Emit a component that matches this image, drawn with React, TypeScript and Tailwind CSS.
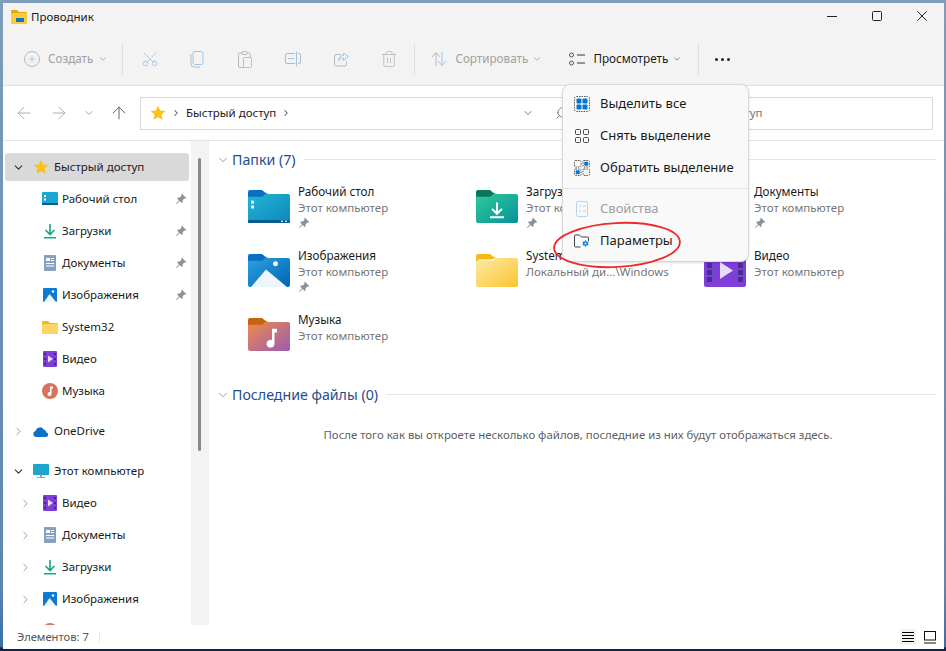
import React from "react";
import { ChevronDown, ChevronRight, Plus, Scissors, Trash2, ArrowLeft, ArrowRight, ArrowUp, Search } from "lucide-react";

// colourful folder with an optional glyph on it
function Folder({ id, tab, from, to, children }: { id: string; tab: string; from: string; to: string; children?: React.ReactNode }) {
  return (
    <svg width="42" height="33" viewBox="0 0 42 34" preserveAspectRatio="none" className="shrink-0">
      <defs>
        <linearGradient id={id} x1="0" y1="0" x2="1" y2="1">
          <stop offset="0" stopColor={from} />
          <stop offset="1" stopColor={to} />
        </linearGradient>
      </defs>
      <path d="M0 2a2 2 0 0 1 2-2h12l3 2.500 3 1.500h-2l-3 4h-15z" fill={tab} />
      <path d="M0 7h14l4-3h22a2 2 0 0 1 2 2v26a2 2 0 0 1-2 2h-38a2 2 0 0 1-2-2z" fill={`url(#${id})`} />
      {children}
    </svg>
  );
}

function Pin({ className = "" }: { className?: string }) {
  return (
    <svg width="12" height="12" viewBox="0 0 12 12" className={className}>
      <path d="M7 .8 11.200 5 10.200 5.800 9.400 5.400 7.600 7.200 7.600 9.200 6.600 10 4.700 8 1.500 11 1 10.500 4 7.300 2 5.400 2.800 4.400 4.800 4.400 6.600 2.600 6.200 1.800z" fill="#8b9199" />
    </svg>
  );
}

const DesktopFolder = () => (
  <Folder id="f1" tab="#0a6ec2" from="#21b6d8" to="#0f86b8">
    <rect x="0" y="31" width="42" height="3" rx="1" fill="#0b5a8c" />
    <rect x="3" y="11" width="3" height="3" fill="#fff" />
    <rect x="3" y="16" width="3" height="3" fill="#fff" />
    <rect x="33" y="31.500" width="2" height="1.500" fill="#bfe6f5" />
    <rect x="37" y="31.500" width="2" height="1.500" fill="#bfe6f5" />
  </Folder>
);
const DownloadFolder = () => (
  <Folder id="f2" tab="#06785f" from="#2fcb97" to="#07929c">
    <path d="M21 13v11M16 19.500l5 5 5-5M14 28h14" stroke="#fff" strokeWidth="2" fill="none" />
  </Folder>
);
const DocsFolder = () => (
  <Folder id="f3" tab="#4d6f9e" from="#9fb9d4" to="#6f8fb5">
    <rect x="12" y="12" width="18" height="2" fill="#fff" />
    <rect x="12" y="17" width="18" height="2" fill="#fff" />
    <rect x="12" y="22" width="12" height="2" fill="#fff" />
  </Folder>
);
const PicturesFolder = () => (
  <Folder id="f4" tab="#0a6ec2" from="#29a3e4" to="#0562ad">
    <circle cx="27.500" cy="10" r="2.500" fill="#fff" />
    <path d="M3 34 18 16 39 34z" fill="#eef6fd" />
  </Folder>
);
const YellowFolder = () => (
  <Folder id="f5" tab="#f5b914" from="#fde9a6" to="#fcc52f">
    <rect x="2" y="5.500" width="16" height="1.500" fill="#fff" opacity="0.8" />
  </Folder>
);
const MusicFolder = () => (
  <Folder id="f6" tab="#c4640f" from="#f08a4a" to="#9a5cb0">
    <path d="M24 11h5v4h-2.500v11.500a4 4 0 1 1-2.500-3.700z" fill="#fff" />
  </Folder>
);
const VideoTile = () => (
  <svg width="42" height="33" viewBox="0 0 42 33" className="shrink-0">
    <rect width="42" height="33" rx="2" fill="#7e3fd8" />
    {[2, 9, 16, 23].map((y) => (
      <React.Fragment key={y}>
        <rect x="3" y={y} width="5" height="5" fill="#45308f" />
        <rect x="34" y={y} width="5" height="5" fill="#45308f" />
      </React.Fragment>
    ))}
    <path d="M16 8 29 16.500 16 25z" fill="#e6dcfa" />
  </svg>
);

// small sidebar glyphs
const SmallIcon = ({ name }: { name: string }) => {
  if (name === "star")
    return (
      <svg width="16" height="16" viewBox="0 0 16 16">
        <path d="M8 .8 10.200 5.500 15.300 6.100 11.500 9.600 12.600 14.800 8 12.200 3.400 14.800 4.500 9.600.7 6.100 5.800 5.500z" fill="#fcc21b" />
      </svg>
    );
  if (name === "desktop")
    return (
      <svg width="16" height="14" viewBox="0 0 16 14">
        <rect width="16" height="12" rx="1" fill="#19a6d1" />
        <rect y="11" width="16" height="2" fill="#0b5a8c" />
        <rect x="2" y="3" width="2" height="2" fill="#fff" />
        <rect x="2" y="6.500" width="2" height="2" fill="#fff" />
      </svg>
    );
  if (name === "download")
    return (
      <svg width="14" height="16" viewBox="0 0 14 16">
        <path d="M7 1v10M2.500 7 7 11.500 11.500 7" stroke="#12a884" strokeWidth="1.600" fill="none" />
        <rect x="1" y="14" width="12" height="1.500" fill="#12a884" />
      </svg>
    );
  if (name === "docs")
    return (
      <svg width="12" height="16" viewBox="0 0 12 16">
        <rect width="12" height="16" rx="1" fill="#86a0bf" />
        <rect x="2" y="3" width="4" height="3" fill="#fff" />
        <rect x="7" y="3" width="3" height="1" fill="#fff" />
        <rect x="7" y="5" width="3" height="1" fill="#fff" />
        <rect x="2" y="8" width="8" height="1" fill="#fff" />
        <rect x="2" y="10.500" width="8" height="1" fill="#fff" />
      </svg>
    );
  if (name === "pictures")
    return (
      <svg width="14" height="14" viewBox="0 0 14 14">
        <rect width="14" height="14" rx="1" fill="#0f7bd0" />
        <circle cx="10" cy="3.500" r="1.200" fill="#fff" />
        <path d="M1 14 6.500 6 13 14z" fill="#eef6fd" />
      </svg>
    );
  if (name === "folder")
    return (
      <svg width="16" height="13" viewBox="0 0 16 13">
        <path d="M0 1a1 1 0 0 1 1-1h5l2 2h7a1 1 0 0 1 1 1v1h-16z" fill="#f5b914" />
        <path d="M0 3h16v9a1 1 0 0 1-1 1h-14a1 1 0 0 1-1-1z" fill="#fdd565" />
      </svg>
    );
  if (name === "video")
    return (
      <svg width="14" height="16" viewBox="0 0 14 16">
        <rect width="14" height="16" rx="1" fill="#7e3fd8" />
        {[2, 7, 12].map((y) => (
          <React.Fragment key={y}>
            <rect x="1" y={y} width="2" height="2" fill="#3f2a80" />
            <rect x="11" y={y} width="2" height="2" fill="#3f2a80" />
          </React.Fragment>
        ))}
        <path d="M5 4.500 10 8 5 11.500z" fill="#e6dcfa" />
      </svg>
    );
  if (name === "music")
    return (
      <svg width="16" height="16" viewBox="0 0 16 16">
        <circle cx="8" cy="8" r="8" fill="#d9735c" />
        <path d="M8 3.500h3v2h-1.500v5.500a2 2 0 1 1-1.500-1.900z" fill="#fff" />
      </svg>
    );
  if (name === "onedrive")
    return (
      <svg width="16" height="11" viewBox="0 0 16 11">
        <path d="M3 11a3 3 0 0 1-.500-5.900 4.500 4.500 0 0 1 8.200-1.700 3.800 3.800 0 0 1 2.800 3.100 2.300 2.300 0 0 1-.300 4.500z" fill="#0f6fc6" />
      </svg>
    );
  return (
    <svg width="16" height="15" viewBox="0 0 16 15">
      <rect width="16" height="11" rx="1" fill="#1ea6cf" />
      <rect x="7" y="11" width="2" height="2" fill="#9aa5ad" />
      <rect x="4" y="13" width="8" height="1" fill="#9aa5ad" />
    </svg>
  );
};

type NavItem = { label?: string; icon: string; pin?: boolean; arrow?: boolean };

function NavRow({ label, icon, pin, arrow }: NavItem) {
  return (
    <div className="h-8 flex items-center pr-[4px] shrink-0">
      <div className="w-[34px] pl-[16px] shrink-0">
        {arrow && <ChevronRight size={13} strokeWidth={1.5} className="text-[#8a8a8a]" />}
      </div>
      <div className="w-[25px] shrink-0 flex justify-center">
        <SmallIcon name={icon} />
      </div>
      <span className="flex-1 text-[11.500px] text-[#1a1a1a]">{label}</span>
      {pin && <Pin />}
    </div>
  );
}

function NavHeader({ label, icon, open, active }: { label: string; icon: string; open?: boolean; active?: boolean }) {
  return (
    <div className={`h-7 flex items-center shrink-0 mx-[2px] rounded-[3px] ${active ? "bg-[#d9d9d9]" : ""}`}>
      <div className="w-[26px] pl-[7px] shrink-0">
        {open ? (
          <ChevronDown size={13} strokeWidth={2} className="text-[#333]" />
        ) : (
          <ChevronRight size={13} strokeWidth={1.5} className="text-[#8a8a8a]" />
        )}
      </div>
      <div className="w-[16px] mr-[5px] ml-[2px] shrink-0 flex justify-center">
        <SmallIcon name={icon} />
      </div>
      <span className="text-[11.500px] text-[#1a1a1a] pb-[1px]">{label}</span>
    </div>
  );
}

const folders = [
  { name: "Рабочий стол", sub: "Этот компьютер", pin: true, icon: <DesktopFolder /> },
  { name: "Загрузки", sub: "Этот компьютер", pin: true, icon: <DownloadFolder /> },
  { name: "Документы", sub: "Этот компьютер", pin: true, icon: <DocsFolder /> },
  { name: "Изображения", sub: "Этот компьютер", pin: true, icon: <PicturesFolder /> },
  { name: "System32", sub: "Локальный ди...\\Windows", pin: false, icon: <YellowFolder /> },
  { name: "Видео", sub: "Этот компьютер", pin: false, icon: <VideoTile /> },
  { name: "Музыка", sub: "Этот компьютер", pin: false, icon: <MusicFolder /> },
];

const toolSep = <div className="w-px h-8 bg-[#e0e0e0] shrink-0" />;

const dashed = { stroke: "#555", strokeDasharray: "1.500 1", fill: "none" };

const SelectAllIcon = () => (
  <svg width="16" height="16" viewBox="0 0 16 16" className="shrink-0">
    <rect x="0.500" y="0.500" width="15" height="15" rx="2" {...dashed} />
    <rect x="2.500" y="2.500" width="5" height="5" rx="1" fill="#0078d4" />
    <rect x="8.500" y="2.500" width="5" height="5" rx="1" fill="#0078d4" />
    <rect x="2.500" y="8.500" width="5" height="5" rx="1" fill="#0078d4" />
    <rect x="8.500" y="8.500" width="5" height="5" rx="1" fill="#0078d4" />
  </svg>
);
const SelectNoneIcon = () => (
  <svg width="16" height="16" viewBox="0 0 16 16" className="shrink-0" fill="none" stroke="#444">
    <rect x="1.500" y="1.500" width="5" height="5" rx="1" />
    <rect x="9.500" y="1.500" width="5" height="5" rx="1" />
    <rect x="1.500" y="9.500" width="5" height="5" rx="1" />
    <rect x="9.500" y="9.500" width="5" height="5" rx="1" />
  </svg>
);
const SelectInvertIcon = () => (
  <svg width="16" height="16" viewBox="0 0 16 16" className="shrink-0">
    <rect x="0.500" y="0.500" width="6.500" height="6.500" rx="1" {...dashed} />
    <rect x="9" y="0.500" width="6.500" height="6.500" rx="1" {...dashed} />
    <rect x="10.200" y="1.700" width="4.100" height="4.100" rx="1" fill="#0078d4" />
    <rect x="0.500" y="9" width="6.500" height="6.500" rx="1" {...dashed} />
    <rect x="1.700" y="10.200" width="4.100" height="4.100" rx="1" fill="#0078d4" />
    <rect x="9" y="9" width="6.500" height="6.500" rx="1" {...dashed} />
  </svg>
);

export default function App() {
  return (
    <div className="w-[946px] h-[651px] bg-[linear-gradient(180deg,#7d9dba_0%,#5f86ad_90%,#3a6ea8_99.400%,#0d2347_99.500%)] p-[3px] pr-[2px] overflow-hidden" style={{ fontFamily: '"Noto Sans", sans-serif' }}>
      <div className="relative w-full h-[646px] bg-white flex flex-col">
        {/* title + command bar */}
        <div className="h-[83px] bg-[#f3f3f3] border-b border-[#e0e0e0] shrink-0 flex flex-col">
          <div className="h-[28px] flex items-center pl-[8px] shrink-0">
            <svg width="16" height="14" viewBox="0 0 16 14" className="mr-[4px]">
              <path d="M0 1a1 1 0 0 1 1-1h5l2 2h7a1 1 0 0 1 1 1v1h-16z" fill="#e8a80c" />
              <path d="M0 3h16v10a1 1 0 0 1-1 1h-14a1 1 0 0 1-1-1z" fill="#fcc93c" />
              <rect x="5" y="8" width="8" height="4" fill="#0f76c8" />
            </svg>
            <span className="text-[11.500px] text-[#1a1a1a]">Проводник</span>
            <div className="flex-1" />
            <svg width="10" height="10" viewBox="0 0 10 10" className="mr-[35px] mb-[2px]" fill="none" stroke="#222">
              <path d="M0 5.500h10" />
            </svg>
            <svg width="10" height="10" viewBox="0 0 10 10" className="mr-[35px] mb-[2px]" fill="none" stroke="#222">
              <rect x="0.500" y="0.500" width="9" height="9" rx="1" />
            </svg>
            <svg width="10" height="10" viewBox="0 0 10 10" className="mr-[17px] mb-[2px]" fill="none" stroke="#222">
              <path d="M.3.300l9.400 9.400M9.700.300l-9.400 9.400" />
            </svg>
          </div>
          <div className="flex-1 flex items-center pl-[21px] pt-[2px]">
            <div className="w-[16px] h-[16px] rounded-full border border-[#b9b9b9] flex items-center justify-center mr-[8px]">
              <Plus size={10} className="text-[#9cc5e8]" />
            </div>
            <span className="text-[11.700px] text-[#a0a0a0]">Создать</span>
            <ChevronDown size={10} className="text-[#a0a0a0] ml-[5px] mr-[14px]" />
            {toolSep}
            <Scissors size={18} strokeWidth={1.1} className="text-[#9cc5e8] ml-[18px] -rotate-90" />
            <svg width="14" height="17" viewBox="0 0 14 17" className="ml-[31px]" fill="none">
              <rect x="3" y="0.500" width="10" height="13" rx="2" stroke="#9cc5e8" />
              <path d="M1 3v10a3 3 0 0 0 3 3h6" stroke="#b9b9b9" />
            </svg>
            <svg width="14" height="17" viewBox="0 0 14 17" className="ml-[34px]" fill="none">
              <rect x="0.500" y="2" width="12" height="14.500" rx="1.500" stroke="#b9b9b9" />
              <rect x="4" y="0.500" width="5" height="3" rx="1" stroke="#b9b9b9" fill="#f3f3f3" />
              <rect x="5.500" y="6.500" width="8" height="10" rx="1" stroke="#9cc5e8" fill="#f3f3f3" />
            </svg>
            <svg width="16" height="16" viewBox="0 0 16 16" className="ml-[33px]" fill="none">
              <path d="M10 2.500h-8a1.500 1.500 0 0 0-1.500 1.500v7a1.500 1.500 0 0 0 1.500 1.500h8M13 2.500h1a1.500 1.500 0 0 1 1.500 1.500v7a1.500 1.500 0 0 1-1.500 1.500h-1" stroke="#b9b9b9" />
              <path d="M11.500 .5v15M3 7.500h6" stroke="#9cc5e8" />
            </svg>
            <svg width="15" height="15" viewBox="0 0 15 15" className="ml-[33px]" fill="none">
              <path d="M7 2.500h-5a1.500 1.500 0 0 0-1.500 1.500v8.500a1.500 1.500 0 0 0 1.500 1.500h9a1.500 1.500 0 0 0 1.500-1.500v-3" stroke="#b9b9b9" />
              <path d="M9.500 1v2.500c-3 0-5 2-5 5.500 1-2 2.500-2.800 5-2.800v2.300l5-4z" stroke="#9cc5e8" />
            </svg>
            <Trash2 size={18} strokeWidth={1.1} className="text-[#b9b9b9] ml-[31px]" />
            <div className="ml-[16px]">{toolSep}</div>
            <svg width="16" height="16" viewBox="0 0 16 16" className="ml-[16px]" fill="none">
              <path d="M5 15V2M1 6l4-4.500L9 6" stroke="#b9b9b9" />
              <path d="M11 1v13M7 10l4 4.500 4-4.500" stroke="#9cc5e8" />
            </svg>
            <span className="text-[11.700px] text-[#a0a0a0] ml-[8px] w-[72px] whitespace-nowrap">Сортировать</span>
            <ChevronDown size={10} className="text-[#a0a0a0] ml-[5px]" />
            <svg width="16" height="14" viewBox="0 0 16 14" className="ml-[27px] shrink-0" fill="none">
              <circle cx="2.500" cy="3" r="2" stroke="#555" />
              <circle cx="2.500" cy="11" r="2" stroke="#555" />
              <path d="M8 3h8M8 11h8" stroke="#333" />
            </svg>
            <span className="text-[11.700px] text-[#1a1a1a] ml-[8px] w-[74px] whitespace-nowrap">Просмотреть</span>
            <ChevronDown size={10} className="text-[#777] ml-[5px] mr-[16px]" />
            {toolSep}
            <div className="flex gap-[3px] ml-[16px]">
              <div className="w-[3px] h-[3px] rounded-full bg-[#222]" />
              <div className="w-[3px] h-[3px] rounded-full bg-[#222]" />
              <div className="w-[3px] h-[3px] rounded-full bg-[#222]" />
            </div>
          </div>
        </div>

        {/* address row */}
        <div className="h-[55px] border-b border-[#e5e5e5] shrink-0 flex items-center pl-[11px] pr-[11px]">
          <ArrowLeft size={20} strokeWidth={1.1} className="text-[#a8a8a8]" />
          <ArrowRight size={20} strokeWidth={1.1} className="text-[#a8a8a8] ml-[15px]" />
          <ChevronDown size={12} className="text-[#a8a8a8] ml-[14px]" />
          <ArrowUp size={20} strokeWidth={1.1} className="text-[#555] ml-[14px]" />
          <div className="ml-[11px] flex-1 h-[33px] border border-[#d9d9d9] flex items-center text-[11.500px]">
            <div className="w-[393px] shrink-0 flex items-center pl-[9px]">
              <SmallIcon name="star" />
              <ChevronRight size={10} strokeWidth={2.500} className="text-[#555] ml-[5px] mr-[5px]" />
              <span className="text-[#1a1a1a]">Быстрый доступ</span>
              <ChevronRight size={10} strokeWidth={2.500} className="text-[#555] ml-[5px]" />
              <div className="flex-1" />
              <ChevronDown size={12} className="text-[#777]" />
            </div>
            <Search size={14} strokeWidth={1.2} className="text-[#555] ml-[21px] -scale-x-100" />
            <span className="text-[#777] ml-[63px]">Поиск: Быстрый доступ</span>
          </div>
        </div>

        {/* body */}
        <div className="flex-1 flex min-h-0">
          <div className="w-[188px] shrink-0 overflow-hidden flex flex-col pt-[12px]">
            <NavHeader label="Быстрый доступ" icon="star" open active />
            <div className="h-[2px] shrink-0" />
            <NavRow label="Рабочий стол" icon="desktop" pin />
            <NavRow label="Загрузки" icon="download" pin />
            <NavRow label="Документы" icon="docs" pin />
            <NavRow label="Изображения" icon="pictures" pin />
            <NavRow label="System32" icon="folder" />
            <NavRow label="Видео" icon="video" />
            <NavRow label="Музыка" icon="music" />
            <div className="h-[10px] shrink-0" />
            <NavHeader label="OneDrive" icon="onedrive" />
            <div className="h-[12px] shrink-0" />
            <NavHeader label="Этот компьютер" icon="pc" open />
            <div className="h-[2px] shrink-0" />
            <NavRow label="Видео" icon="video" arrow />
            <NavRow label="Документы" icon="docs" arrow />
            <NavRow label="Загрузки" icon="download" arrow />
            <NavRow label="Изображения" icon="pictures" arrow />
            {/* next row is cut off by the status bar, only its icon top shows */}
            <NavRow icon="music" arrow />
          </div>
          <div className="w-[17px] shrink-0 bg-[#f3f3f3] pl-[7px] pt-[17px]">
            <div className="w-[3px] h-[293px] bg-[#8a8a8a] rounded-full" />
          </div>
          <div className="flex-1 border-l border-[#efefef] pl-[7px] pr-[8px] pt-[10px]">
            <div className="flex items-center h-[17px]">
              <ChevronDown size={14} strokeWidth={1.2} className="text-[#777] mr-[2px]" />
              <span className="text-[14.200px] text-[#1f4e8c] mr-[8px]">Папки (7)</span>
              <div className="flex-1 h-px bg-[#e5e5e5]" />
            </div>
            <div className="grid grid-cols-[228px_228px_228px] auto-rows-[64px] pl-[32px] pt-[16px]">
              {folders.map((f) => (
                <div key={f.name} className="flex">
                  <div className="mt-[6px] mr-[8px]">{f.icon}</div>
                  <div className="flex flex-col">
                    <span className="text-[11.700px] leading-[16px] text-[#1a1a1a] -mt-[1px] mb-[1px]">{f.name}</span>
                    <span className="text-[11.500px] leading-[16px] text-[#767676]">{f.sub}</span>
                    {f.pin && <Pin className="mt-[1px]" />}
                  </div>
                </div>
              ))}
            </div>
            <div className="flex items-center h-[17px] mt-[10px]">
              <ChevronDown size={14} strokeWidth={1.2} className="text-[#777] mr-[2px]" />
              <span className="text-[14.200px] text-[#1f4e8c] mr-[8px]">Последние файлы (0)</span>
              <div className="flex-1 h-px bg-[#e5e5e5]" />
            </div>
            <p className="text-center text-[11.400px] text-[#5f5f5f] mt-[23px] pl-[4px]">
              После того как вы откроете несколько файлов, последние из них будут отображаться здесь.
            </p>
          </div>
        </div>

        {/* status bar */}
        <div className="h-[24px] shrink-0 bg-white flex items-center pl-[14px] pr-[2px] relative">
          <span className="text-[11.200px] text-[#555] w-[82px]">Элементов: 7</span>
          <div className="w-px h-[11px] bg-[#e5e5e5]" />
          <div className="flex-1" />
          <div className="w-[16px] h-[16px] bg-[#f3f3f3] rounded-[2px] flex flex-col justify-center gap-[2px] mr-[8px] px-[2px]">
            <div className="h-px bg-black" />
            <div className="h-px bg-black" />
            <div className="h-px bg-black" />
            <div className="h-px bg-black" />
          </div>
          <svg width="14" height="13" viewBox="0 0 14 13" className="mr-[4px]" fill="none">
            <rect x="0.500" y="0.500" width="11" height="8.500" stroke="#111" />
            <path d="M0 12h12" stroke="#111" />
          </svg>
        </div>

        {/* menu */}
        <div className="absolute left-[559px] top-[81px] w-[187px] h-[178px] bg-[#f9f9f9] border border-[#d8d8d8] rounded-[8px] shadow-sm flex flex-col py-[3px] text-[13px] text-[#1a1a1a]">
          <div className="h-8 flex items-center pl-[11px] gap-[10px]"><SelectAllIcon /><span>Выделить все</span></div>
          <div className="h-8 flex items-center pl-[11px] gap-[10px]"><SelectNoneIcon /><span>Снять выделение</span></div>
          <div className="h-8 flex items-center pl-[11px] gap-[10px]"><SelectInvertIcon /><span>Обратить выделение</span></div>
          <div className="h-px bg-[#e5e5e5] my-[4px]" />
          <div className="h-8 flex items-center pl-[11px] gap-[10px] text-[#a0a0a0]">
            <svg width="16" height="16" viewBox="0 0 16 16" fill="none" className="shrink-0">
              <rect x="2.500" y="0.500" width="11" height="15" rx="1.500" stroke="#b8d4ec" />
              <path d="M5 5h2M5 10h2M9 5h3M9 10h3" stroke="#b8d4ec" />
            </svg>
            <span>Свойства</span>
          </div>
          <div className="h-8 flex items-center pl-[11px] gap-[10px]">
            <svg width="16" height="16" viewBox="0 0 16 16" fill="none" className="shrink-0">
              <path d="M.5 13V3a1 1 0 0 1 1-1h4l2 2h6a1 1 0 0 1 1 1v3M.5 13a1 1 0 0 0 1 1h5" stroke="#444" />
              <path d="M11.500 7 12.500 8.700 14.800 8.700 13.700 10.500 14.800 12.300 12.500 12.300 11.500 14 10.500 12.300 8.200 12.300 9.300 10.500 8.200 8.700 10.500 8.700z" fill="#0078d4" />
              <circle cx="11.500" cy="10.500" r="1" fill="#f9f9f9" />
            </svg>
            <span>Параметры</span>
          </div>
        </div>

        {/* red marker ellipse */}
        <svg width="132" height="48" viewBox="0 0 132 48" className="absolute left-[548px] top-[218px]" fill="none">
          <ellipse cx="66" cy="24" rx="63" ry="22" stroke="#ee2a2a" strokeWidth="1.800" transform="rotate(-3 66 24)" />
        </svg>
      </div>
    </div>
  );
}
